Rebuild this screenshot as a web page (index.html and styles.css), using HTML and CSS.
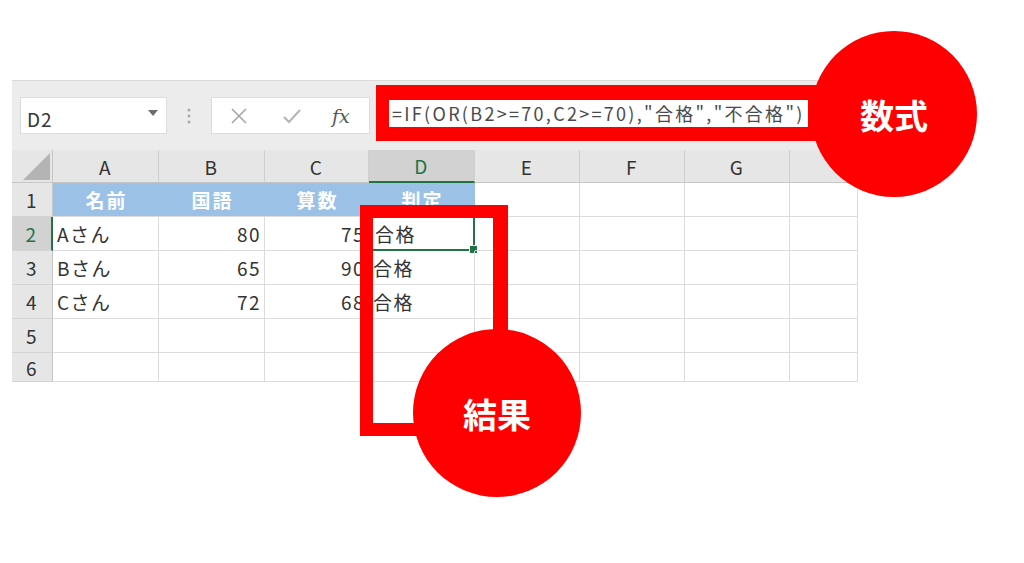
FILE: index.html
```html
<!DOCTYPE html>
<html lang="ja">
<head>
  <meta charset="UTF-8">
  <title>IF OR 関数</title>
  <link rel="stylesheet" href="styles.css">
</head>
<body>
  <div class="sheet">
    <div class="toolbar">
      <div class="namebox">
        <span>D2</span>
        <svg class="caret" width="10" height="6" viewBox="0 0 10 6"><path d="M0 0h10L5 6z" fill="#6b6b6b"/></svg>
      </div>
      <div class="grip">
        <svg width="4" height="16" viewBox="0 0 4 16"><circle cx="2" cy="2" r="1.5" fill="#a8a8a8"/><circle cx="2" cy="8" r="1.5" fill="#a8a8a8"/><circle cx="2" cy="14" r="1.5" fill="#a8a8a8"/></svg>
      </div>
      <div class="fxbox">
        <svg width="18" height="18" viewBox="0 0 18 18"><path d="M2 2L16 16M16 2L2 16" stroke="#a6a6a6" stroke-width="1.6" fill="none"/></svg>
        <svg width="20" height="18" viewBox="0 0 20 18"><path d="M2 10l5 5L18 3" stroke="#b4b4b4" stroke-width="2" fill="none"/></svg>
        <span class="fx">fx</span>
      </div>
      <div class="formula">=IF(OR(B2&gt;=70,C2&gt;=70),"合格","不合格")</div>
    </div>

    <div class="grid">
      <div class="corner"></div>
      <div class="colhead">A</div>
      <div class="colhead">B</div>
      <div class="colhead">C</div>
      <div class="colhead active">D</div>
      <div class="colhead">E</div>
      <div class="colhead">F</div>
      <div class="colhead">G</div>
      <div class="colhead"></div>

      <div class="rowhead">1</div>
      <div class="cell title">名前</div>
      <div class="cell title">国語</div>
      <div class="cell title">算数</div>
      <div class="cell title">判定</div>
      <div class="cell"></div><div class="cell"></div><div class="cell"></div><div class="cell"></div>

      <div class="rowhead active">2</div>
      <div class="cell">Aさん</div>
      <div class="cell num">80</div>
      <div class="cell num">75</div>
      <div class="cell selected">合格<span class="handle"></span></div>
      <div class="cell"></div><div class="cell"></div><div class="cell"></div><div class="cell"></div>

      <div class="rowhead">3</div>
      <div class="cell">Bさん</div>
      <div class="cell num">65</div>
      <div class="cell num">90</div>
      <div class="cell">合格</div>
      <div class="cell"></div><div class="cell"></div><div class="cell"></div><div class="cell"></div>

      <div class="rowhead">4</div>
      <div class="cell">Cさん</div>
      <div class="cell num">72</div>
      <div class="cell num">68</div>
      <div class="cell">合格</div>
      <div class="cell"></div><div class="cell"></div><div class="cell"></div><div class="cell"></div>

      <div class="rowhead">5</div>
      <div class="cell"></div><div class="cell"></div><div class="cell"></div><div class="cell"></div>
      <div class="cell"></div><div class="cell"></div><div class="cell"></div><div class="cell"></div>

      <div class="rowhead">6</div>
      <div class="cell"></div><div class="cell"></div><div class="cell"></div><div class="cell"></div>
      <div class="cell"></div><div class="cell"></div><div class="cell"></div><div class="cell"></div>
    </div>
  </div>

  <!-- 注釈 -->
  <div class="frame frame-formula"></div>
  <div class="frame frame-result"></div>
  <div class="badge badge-formula">数式</div>
  <div class="badge badge-result">結果</div>
</body>
</html>
```

FILE: styles.css
```css
body {
  margin: 0;
  width: 1024px;
  height: 563px;
  background: #fff;
  font-family: "Noto Sans CJK JP", "Noto Sans", sans-serif;
  color: #333;
  position: relative;
  overflow: hidden;
}
.sheet {
  margin: 80px 0 0 12px;
  width: 846px;
}
.toolbar {
  height: 70px;
  box-sizing: border-box;
  background: #ececec;
  border-top: 1px solid #dadada;
  display: flex;
  align-items: flex-start;
  padding: 16px 0 0 8px;
}
.namebox {
  width: 147px;
  height: 37px;
  box-sizing: border-box;
  background: #fff;
  border: 1px solid #dcdcdc;
  display: flex;
  align-items: center;
  justify-content: space-between;
  padding: 0 8px 0 6px;
  font-size: 19px;
  letter-spacing: 1px;
}
.namebox span {
  padding-top: 6px;
}
.caret {
  margin-bottom: 6px;
}
.grip {
  width: 44px;
  height: 37px;
  display: flex;
  align-items: center;
  justify-content: center;
}
.fxbox {
  width: 159px;
  height: 37px;
  box-sizing: border-box;
  background: #fff;
  border: 1px solid #dcdcdc;
  display: flex;
  align-items: center;
  padding: 0 14px 0 18px;
  gap: 34px;
}
.fx {
  font-family: "DejaVu Serif", "Liberation Serif", serif;
  font-style: italic;
  font-size: 19px;
  color: #555;
  margin-left: -4px;
}
.formula {
  margin-left: 6px;
  width: 432px;
  height: 37px;
  box-sizing: border-box;
  background: #fff;
  padding: 3px 0 0 16px;
  font-size: 18px;
  color: #4a4a4a;
  white-space: nowrap;
  overflow: hidden;
  letter-spacing: 2.3px;
}
.grid {
  display: grid;
  grid-template-columns: 41px 106px 106px 104px 106px 105px 105px 105px 68px;
  grid-template-rows: 33px 34px 34px 34px 34px 34px 29px;
  font-size: 19px;
  letter-spacing: 1.5px;
}
.corner,
.colhead,
.rowhead {
  background: #e6e6e6;
  box-sizing: border-box;
  color: #333;
}
.corner {
  position: relative;
  border-bottom: 1px solid #c6c6c6;
  border-right: 1px solid #c6c6c6;
}
.corner::after {
  content: "";
  position: absolute;
  right: 2px;
  bottom: 2px;
  border-style: solid;
  border-width: 0 0 27px 27px;
  border-color: transparent transparent #b4b4b4 transparent;
}
.colhead {
  display: flex;
  align-items: center;
  justify-content: center;
  border-right: 1px solid #cfcfcf;
  border-bottom: 1px solid #c6c6c6;
}
.colhead.active {
  background: #d2d2d2;
  color: #217346;
  border-bottom: 2px solid #217346;
}
.rowhead {
  display: flex;
  align-items: center;
  justify-content: center;
  border-right: 1px solid #c6c6c6;
  border-bottom: 1px solid #d4d4d4;
}
.rowhead.active {
  background: #d2d2d2;
  color: #217346;
  border-right: 2px solid #217346;
}
.cell {
  position: relative;
  display: flex;
  align-items: center;
  padding: 0 3px 0 4px;
  box-sizing: border-box;
  border-right: 1px solid #dcdcdc;
  border-bottom: 1px solid #dcdcdc;
  white-space: nowrap;
}
.cell.num {
  justify-content: flex-end;
}
.cell.title {
  background: #9bc2e6;
  color: #fff;
  font-weight: bold;
  letter-spacing: 2px;
  justify-content: center;
  border-right: none;
  border-bottom-color: #dcdcdc;
}
.cell.selected {
  border: 2px solid #217346;
  margin: -1px 0 0 -1px;
  padding-left: 5px;
}
.handle {
  position: absolute;
  right: -5px;
  bottom: -5px;
  width: 7px;
  height: 7px;
  background: #217346;
  border: 1px solid #fff;
}
.frame {
  position: absolute;
  border: 14px solid #ff0000;
  box-sizing: border-box;
}
.frame-formula {
  left: 376px;
  top: 85px;
  width: 446px;
  height: 56px;
  border-left-width: 13px;
  border-top-width: 15px;
}
.frame-result {
  left: 360px;
  top: 205px;
  width: 148px;
  height: 231px;
  border-left-width: 13px;
  border-top-width: 13px;
  border-bottom-width: 13px;
  border-right-width: 15px;
}
.badge {
  position: absolute;
  border-radius: 50%;
  background: #ff0000;
  color: #fff;
  font-weight: bold;
  font-size: 34px;
  display: flex;
  align-items: center;
  justify-content: center;
}
.badge-formula {
  left: 811px;
  top: 31px;
  width: 166px;
  height: 166px;
}
.badge-result {
  left: 413px;
  top: 329px;
  width: 168px;
  height: 168px;
}
```
